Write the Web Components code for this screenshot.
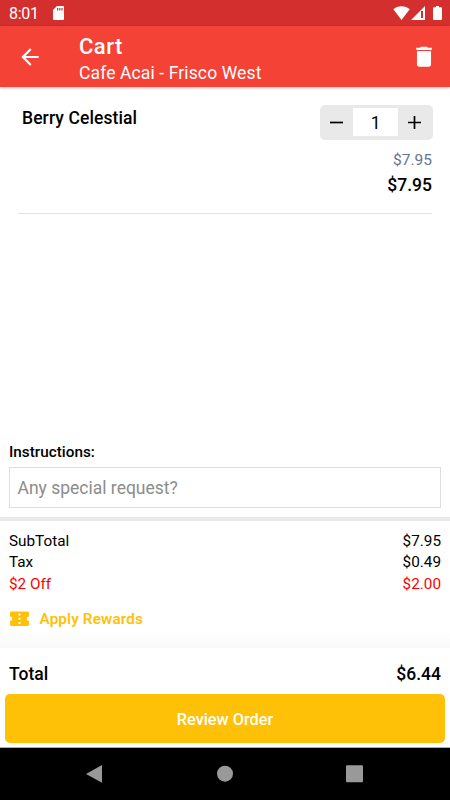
<!DOCTYPE html>
<html lang="en">
<head>
<meta charset="utf-8">
<meta name="viewport" content="width=device-width, initial-scale=1">
<title>Cart</title>
<style>
  body {
    margin: 0;
    background: #fff;
    color: #000;
    font-family: Roboto, "Liberation Sans", sans-serif;
  }
</style>
</head>
<body>
<cart-screen></cart-screen>

<script>
function html(strings) {
  const template = document.createElement('template');
  template.innerHTML = strings[0];
  return template;
}

class Component extends HTMLElement {
  constructor() {
    super();
    this.attachShadow({ mode: 'open' });
    let template = this.constructor.template;
    this.shadowRoot.appendChild(document.importNode(template.content, true));
  }
}

class StatusBar extends Component {}
StatusBar.template = html`
  <style>
    :host {
      display: flex;
      align-items: center;
      box-sizing: border-box;
      height: 26px;
      padding: 0 8px 0 9px;
      background: #d32f2f;
      color: #fff;
      font-size: 16px;
      line-height: 26px;
      letter-spacing: -.3px;
    }

    time {
      width: 44px;
      padding-top: 2px;
    }

    svg {
      display: block;
      fill: currentColor;
    }

    .right {
      display: flex;
      align-items: center;
      margin-left: auto;
    }

    .battery {
      margin-left: 8px;
    }
  </style>
  <time>8:01</time>
  <svg width="11" height="14" viewBox="0 0 11 14">
    <path fill-rule="evenodd" d="M4 0h6a1 1 0 0 1 1 1v12a1 1 0 0 1-1 1H1a1 1 0 0 1-1-1V4zM4 2v2.6h1.2V2zM6.2 2v2.6h1.2V2zM8.4 2v2.6h1.2V2z"/>
  </svg>
  <div class="right">
    <svg width="17" height="14" viewBox="0 0 17 14">
      <path d="M8.5 14 .3 3.2C2.5 1.3 5.3 .3 8.5 .3s6 1 8.2 2.900z"/>
    </svg>
    <svg width="15" height="14" viewBox="0 0 15 14">
      <path fill-rule="evenodd" d="M15 0v14H1zM11 5v7h2V5z"/>
    </svg>
    <svg class="battery" width="9" height="14" viewBox="0 0 9 14">
      <path d="M3 0h3v1.3h2a1 1 0 0 1 1 1V13a1 1 0 0 1-1 1H1a1 1 0 0 1-1-1V2.3a1 1 0 0 1 1-1h2z"/>
    </svg>
  </div>
`;

class AppBar extends Component {}
AppBar.template = html`
  <style>
    :host {
      display: flex;
      align-items: center;
      box-sizing: border-box;
      height: 61px;
      padding: 0 13px 0 17px;
      background: #f44336;
      color: #fff;
      box-shadow: 0 1px 3px rgba(0, 0, 0, .25);
      z-index: 1;
    }

    svg {
      display: block;
      fill: currentColor;
    }

    .titles {
      flex: 1;
      margin-left: 36px;
      padding-top: 6px;
    }

    .title {
      font-size: 22px;
      font-weight: 500;
      line-height: 26px;
      letter-spacing: .5px;
    }

    .subtitle {
      font-size: 17.5px;
      line-height: 26px;
      letter-spacing: .12px;
    }
  </style>
  <svg width="26" height="26" viewBox="0 0 24 24">
    <path d="M20 11H7.83l5.59-5.59L12 4l-8 8 8 8 1.41-1.41L7.83 13H20z"/>
  </svg>
  <div class="titles">
    <div class="title"><slot name="title"></slot></div>
    <div class="subtitle"><slot></slot></div>
  </div>
  <svg width="26" height="26" viewBox="0 0 24 24">
    <path d="M5.5 19c0 1.1.9 2 2 2h9c1.1 0 2-.9 2-2V6.500h-13zM19.2 3.500h-3.500l-1-1H9.300l-1 1H4.800v2h14.400z"/>
  </svg>
`;

class QuantityStepper extends Component {}
QuantityStepper.template = html`
  <style>
    :host {
      display: flex;
      box-sizing: border-box;
      width: 113px;
      height: 35px;
      padding: 3px 1px 4px 0;
      border-radius: 5px;
      background: #e9e9e9;
    }

    button {
      display: flex;
      flex: 1;
      align-items: center;
      justify-content: center;
      padding: 0;
      border: 0;
      background: none;
    }

    .count {
      width: 45px;
      background: #fff;
      font-size: 17.5px;
      line-height: 30px;
      text-align: center;
    }

    svg {
      fill: none;
      stroke: #000;
      stroke-width: 1.7;
    }
  </style>
  <button aria-label="Remove one">
    <svg width="13" height="13" viewBox="0 0 13 13"><path d="M0 6.500h13"/></svg>
  </button>
  <div class="count"><slot></slot></div>
  <button aria-label="Add one">
    <svg width="13" height="13" viewBox="0 0 13 13"><path d="M0 6.500h13M6.500 0v13"/></svg>
  </button>
`;

class CartItem extends Component {}
CartItem.template = html`
  <style>
    :host {
      display: block;
      margin: 18px 18px 0;
      height: 108px;
      border-bottom: 1px solid #e3e3e3;
    }

    .top {
      display: flex;
      justify-content: space-between;
      padding-left: 4px;
      margin-right: -.6px;
    }

    .name {
      font-size: 17.5px;
      font-weight: 500;
      line-height: 26px;
      letter-spacing: .09px;
    }

    .price {
      display: block;
      text-align: right;
    }

    .unit {
      margin-top: 7px;
      color: #5f7590;
      font-size: 15.5px;
      line-height: 26px;
    }

    .sum {
      font-size: 17.5px;
      font-weight: 500;
      line-height: 24px;
    }
  </style>
  <div class="top">
    <div class="name"><slot></slot></div>
    <quantity-stepper>1</quantity-stepper>
  </div>
  <div class="price unit"><slot name="unit"></slot></div>
  <div class="price sum"><slot name="sum"></slot></div>
`;

class OrderInstructions extends Component {}
OrderInstructions.template = html`
  <style>
    :host {
      display: block;
      padding: 0 9px 9px;
      border-bottom: 4px solid #e9e9e9;
    }

    label {
      display: block;
      font-size: 15.3px;
      font-weight: 500;
      line-height: 19px;
      margin-bottom: 5px;
    }

    .field {
      box-sizing: border-box;
      height: 41px;
      padding-left: 7.5px;
      border: 1px solid #dedede;
      color: #8c8c8c;
      font-size: 17.5px;
      line-height: 41px;
    }
  </style>
  <label><slot name="label"></slot></label>
  <div class="field"><slot></slot></div>
`;

class SummaryLine extends Component {}
SummaryLine.template = html`
  <style>
    :host {
      display: flex;
      justify-content: space-between;
      font-size: 15.3px;
      line-height: 21.3px;
    }

    :host([discount]) {
      color: #f00;
    }

    :host([total]) {
      font-size: 17.5px;
      font-weight: 500;
      line-height: 26px;
    }
  </style>
  <span><slot></slot></span>
  <span><slot name="amount"></slot></span>
`;

class ApplyRewards extends Component {}
ApplyRewards.template = html`
  <style>
    :host {
      display: flex;
      align-items: center;
      gap: 9.5px;
      padding-left: 1px;
      color: #ffc107;
      font-size: 15.3px;
      font-weight: 600;
      line-height: 20px;
      letter-spacing: .12px;
    }

    svg {
      fill: currentColor;
    }
  </style>
  <svg width="20" height="16" viewBox="0 0 20 16">
    <path fill-rule="evenodd" d="M1.500 .5h16a1.500 1.500 0 0 1 1.500 1.500v3.500a2.200 2.200 0 0 0 0 4.500v3.500A1.500 1.500 0 0 1 17.500 15h-16A1.500 1.500 0 0 1 0 13.500V10a2.200 2.200 0 0 0 0-4.500V2A1.500 1.500 0 0 1 1.500 .5zM8.500 2.500v2h2v-2zM8.500 6.800v2h2v-2zM8.500 11.100v2h2v-2z"/>
  </svg>
  <span><slot></slot></span>
`;

class PrimaryButton extends Component {}
PrimaryButton.template = html`
  <style>
    :host {
      display: block;
    }

    button {
      display: block;
      width: 100%;
      height: 49px;
      padding: 2px 0 0;
      border: 0;
      border-radius: 5px;
      background: #ffc107;
      color: #fff;
      font: 500 16.3px/47px Roboto, "Liberation Sans", sans-serif;
    }
  </style>
  <button><slot></slot></button>
`;

class NavBar extends Component {}
NavBar.template = html`
  <style>
    :host {
      display: flex;
      align-items: center;
      justify-content: center;
      gap: 112px;
      box-sizing: border-box;
      height: 53px;
      border-top: 1px solid #aaa;
      background: #000;
    }

    svg {
      display: block;
      fill: #999;
    }
  </style>
  <svg width="18" height="18" viewBox="0 0 18 18"><path d="M0 8.900 16 0v17.800z"/></svg>
  <svg width="18" height="18" viewBox="0 0 18 18"><circle cx="9" cy="8.700" r="8"/></svg>
  <svg width="18" height="18" viewBox="0 0 18 18"><rect x="0" y=".3" width="17" height="17" rx="1"/></svg>
`;

class CartScreen extends Component {}
CartScreen.template = html`
  <style>
    :host {
      display: flex;
      flex-direction: column;
      width: 450px;
      height: 800px;
      overflow: hidden;
    }

    .items {
      flex: 1;
    }

    .summary {
      box-sizing: border-box;
      height: 127px;
      padding: 10px 9px 0;
      background: linear-gradient(#fff 110px, #f9f9f9);
    }

    apply-rewards {
      margin-top: 14px;
    }

    .footer {
      box-sizing: border-box;
      height: 99px;
      padding: 13px 5px 0;
    }

    .footer summary-line {
      padding: 0 4px;
      margin-bottom: 7px;
    }
  </style>
  <status-bar></status-bar>
  <app-bar>
    <span slot="title">Cart</span>
    Cafe Acai - Frisco West
  </app-bar>
  <div class="items">
    <cart-item>
      Berry Celestial
      <span slot="unit">$7.95</span>
      <span slot="sum">$7.95</span>
    </cart-item>
  </div>
  <order-instructions>
    <span slot="label">Instructions:</span>
    Any special request?
  </order-instructions>
  <div class="summary">
    <summary-line>SubTotal<span slot="amount">$7.95</span></summary-line>
    <summary-line>Tax<span slot="amount">$0.49</span></summary-line>
    <summary-line discount>$2 Off<span slot="amount">$2.00</span></summary-line>
    <apply-rewards>Apply Rewards</apply-rewards>
  </div>
  <div class="footer">
    <summary-line total>Total<span slot="amount">$6.44</span></summary-line>
    <primary-button>Review Order</primary-button>
  </div>
  <nav-bar></nav-bar>
`;

customElements.define('status-bar', StatusBar);
customElements.define('app-bar', AppBar);
customElements.define('quantity-stepper', QuantityStepper);
customElements.define('cart-item', CartItem);
customElements.define('order-instructions', OrderInstructions);
customElements.define('summary-line', SummaryLine);
customElements.define('apply-rewards', ApplyRewards);
customElements.define('primary-button', PrimaryButton);
customElements.define('nav-bar', NavBar);
customElements.define('cart-screen', CartScreen);
</script>
</body>
</html>
